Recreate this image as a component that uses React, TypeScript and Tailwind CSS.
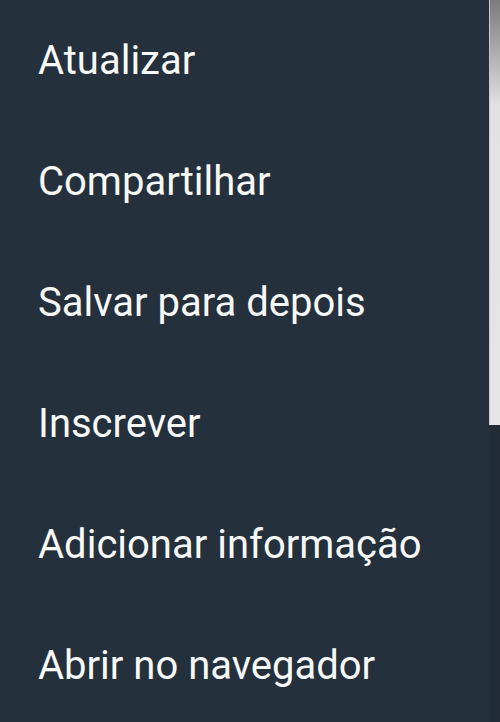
const ITEMS = [
  "Atualizar",
  "Compartilhar",
  "Salvar para depois",
  "Inscrever",
  "Adicionar informação",
  "Abrir no navegador",
];

export default function App() {
  return (
    <div className="w-[500px] h-[722px] bg-[#24303c] flex overflow-hidden" style={{ fontFamily: "Roboto, sans-serif" }}>
      {/* Menu list */}
      <div className="flex-1 flex flex-col pt-[33px]">
        {ITEMS.map(label => (
          <div key={label} className="h-[121px] flex-shrink-0 pl-[38px]">
            <span className="block text-[40px] leading-[56px] text-[#f7f8f8] whitespace-nowrap">{label}</span>
          </div>
        ))}
      </div>

      {/* Scrollbar */}
      <div className="w-[11px] flex-shrink-0 flex flex-col">
        <div className="h-[425px] bg-gradient-to-b from-[#7c7c7c] via-[#e2e2e2] via-25% to-[#e6e6e6] border-l border-[#c8c8c8]" />
        <div className="flex-1 bg-[#212c36]" />
      </div>
    </div>
  );
}
